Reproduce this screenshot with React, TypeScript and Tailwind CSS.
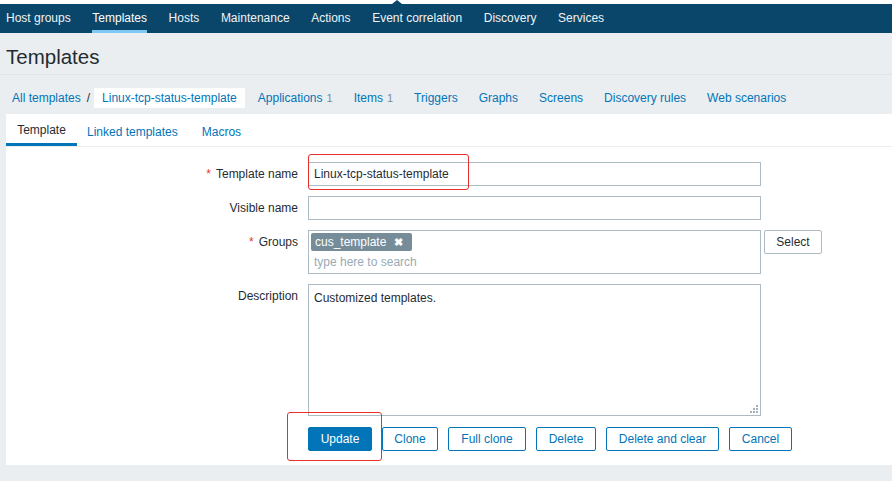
import type { ReactNode } from "react";

const font = { fontFamily: '"Liberation Sans", Arial, sans-serif' };

const menu = ["Host groups", "Templates", "Hosts", "Maintenance", "Actions", "Event correlation", "Discovery", "Services"];

const crumbs: [string, string?][] = [
  ["Applications", "1"],
  ["Items", "1"],
  ["Triggers"],
  ["Graphs"],
  ["Screens"],
  ["Discovery rules"],
  ["Web scenarios"]
];

const buttons: [string, string][] = [
  ["Clone", "w-[56px]"],
  ["Full clone", "w-[78px]"],
  ["Delete", "w-[60px]"],
  ["Delete and clear", "w-[113px]"],
  ["Cancel", "w-[63px]"]
];

function Row({ label, required, children }: { label: string; required?: boolean; children: ReactNode }) {
  return (
    <div className="flex items-start">
      <div className="flex h-[24px] w-[302px] shrink-0 items-center justify-end pr-[10px] text-[12px] text-[#1f2c33]">
        {required && <span className="mr-[5px] text-[#e33734]">*</span>}
        {label}
      </div>
      {children}
    </div>
  );
}

export default function App() {
  return (
    <div style={font} className="relative h-[481px] w-[892px] overflow-hidden bg-[#ebeef0]">
      {/* top strip */}
      <div className="relative h-[4px] bg-white">
        <div className="absolute bottom-0 left-[392px] h-0 w-0 border-x-[5px] border-b-[4px] border-x-transparent border-b-[#0a466a]" />
      </div>
      <nav className="flex h-[29px] items-stretch gap-[21.6px] bg-[#0a466a] pl-[6px]">
        {menu.map(m => (
          <a
            key={m}
            className={`flex items-center border-b-[3px] pt-[2px] text-[12px] ${m === "Templates" ? "border-[#7ec8f3] text-white" : "border-transparent text-[#f0f3f5]"}`}
          >
            {m}
          </a>
        ))}
      </nav>

      <div className="flex h-[42px] items-center border-b border-[#dfe4e7] pl-[6px] pt-[8px]">
        <h1 className="text-[20.5px] leading-none text-[#1f2c33]">Templates</h1>
      </div>

      <div className="flex h-[39px] items-center pl-[12px] pt-[6px] text-[12px]">
        <a className="text-[#0275b8]">All templates</a>
        <span className="ml-[6px] text-[#1f2c33]">/</span>
        <span className="ml-[4px] flex h-[20px] items-center bg-white px-[8px] text-[#0275b8]">Linux-tcp-status-template</span>
        <div className="ml-[13px] flex gap-[21px]">
          {crumbs.map(([t, n]) => (
            <a key={t} className="text-[#0275b8]">
              {t}
              {n && <span className="ml-[4px] text-[11px] text-[#768d99]">{n}</span>}
            </a>
          ))}
        </div>
      </div>

      <div className="ml-[6px] h-[351px] bg-white">
        <div className="flex h-[33px] items-stretch border-b border-[#ebeef0] text-[12px]">
          <div className="flex w-[71px] items-center justify-center border-b-[3px] border-[#0275b8] pt-[3px] text-[#1f2c33]">Template</div>
          <div className="ml-[10px] flex items-center pt-[3px] text-[#0275b8]">Linked templates</div>
          <div className="ml-[24px] flex items-center pt-[3px] text-[#0275b8]">Macros</div>
        </div>

        <div className="flex flex-col gap-[10px] pt-[15px]">
          <Row label="Template name" required>
            <div className="flex h-[24px] w-[453px] items-center border border-[#acbbc4] px-[5px] text-[12px] text-[#1f2c33]">
              Linux-tcp-status-template
            </div>
          </Row>
          <Row label="Visible name">
            <div className="h-[24px] w-[453px] border border-[#acbbc4]" />
          </Row>
          <Row label="Groups" required>
            <div className="flex h-[44px] w-[453px] flex-col border border-[#acbbc4] px-[2px] pt-[2px] text-[12px]">
              <span className="flex h-[18px] w-[101px] items-center gap-[8px] rounded-[2px] bg-[#768d99] px-[4px] text-white">
                cus_template
                <span className="text-[11px] font-bold">✖</span>
              </span>
              <span className="mt-[2px] pl-[3px] text-[#9aabb5]">type here to search</span>
            </div>
            <button className="ml-[3px] flex h-[24px] w-[58px] items-center justify-center rounded-[2px] border border-[#acbbc4] bg-white text-[12px] text-[#1f2c33]">
              Select
            </button>
          </Row>
          <Row label="Description">
            <div className="relative h-[132px] w-[453px] border border-[#acbbc4] px-[5px] pt-[4px] text-[12px] text-[#1f2c33]">
              Customized templates.
              <svg className="absolute bottom-[2px] right-[2px]" width="8" height="8" viewBox="0 0 8 8">
                <g fill="#a7b2b8">
                  <rect x="6" y="0" width="2" height="2" />
                  <rect x="3" y="3" width="2" height="2" />
                  <rect x="6" y="3" width="2" height="2" />
                  <rect x="0" y="6" width="2" height="2" />
                  <rect x="3" y="6" width="2" height="2" />
                  <rect x="6" y="6" width="2" height="2" />
                </g>
              </svg>
            </div>
          </Row>
          <div className="mt-[1px] flex gap-[10px] pl-[302px] text-[12px]">
            <button className="flex h-[24px] w-[64px] items-center justify-center rounded-[2px] border border-[#0275b8] bg-[#0275b8] text-white">Update</button>
            {buttons.map(([b, w]) => (
              <button key={b} className={`flex h-[24px] items-center justify-center rounded-[2px] border border-[#0275b8] bg-white text-[#0275b8] ${w}`}>
                {b}
              </button>
            ))}
          </div>
        </div>
      </div>

      {/* annotation boxes */}
      <div className="absolute left-[308px] top-[154px] h-[36px] w-[161px] rounded-[3px] border border-[#e8302a]" />
      <div className="absolute left-[287px] top-[412px] h-[49px] w-[95px] rounded-[3px] border border-[#e8302a]" />
    </div>
  );
}
